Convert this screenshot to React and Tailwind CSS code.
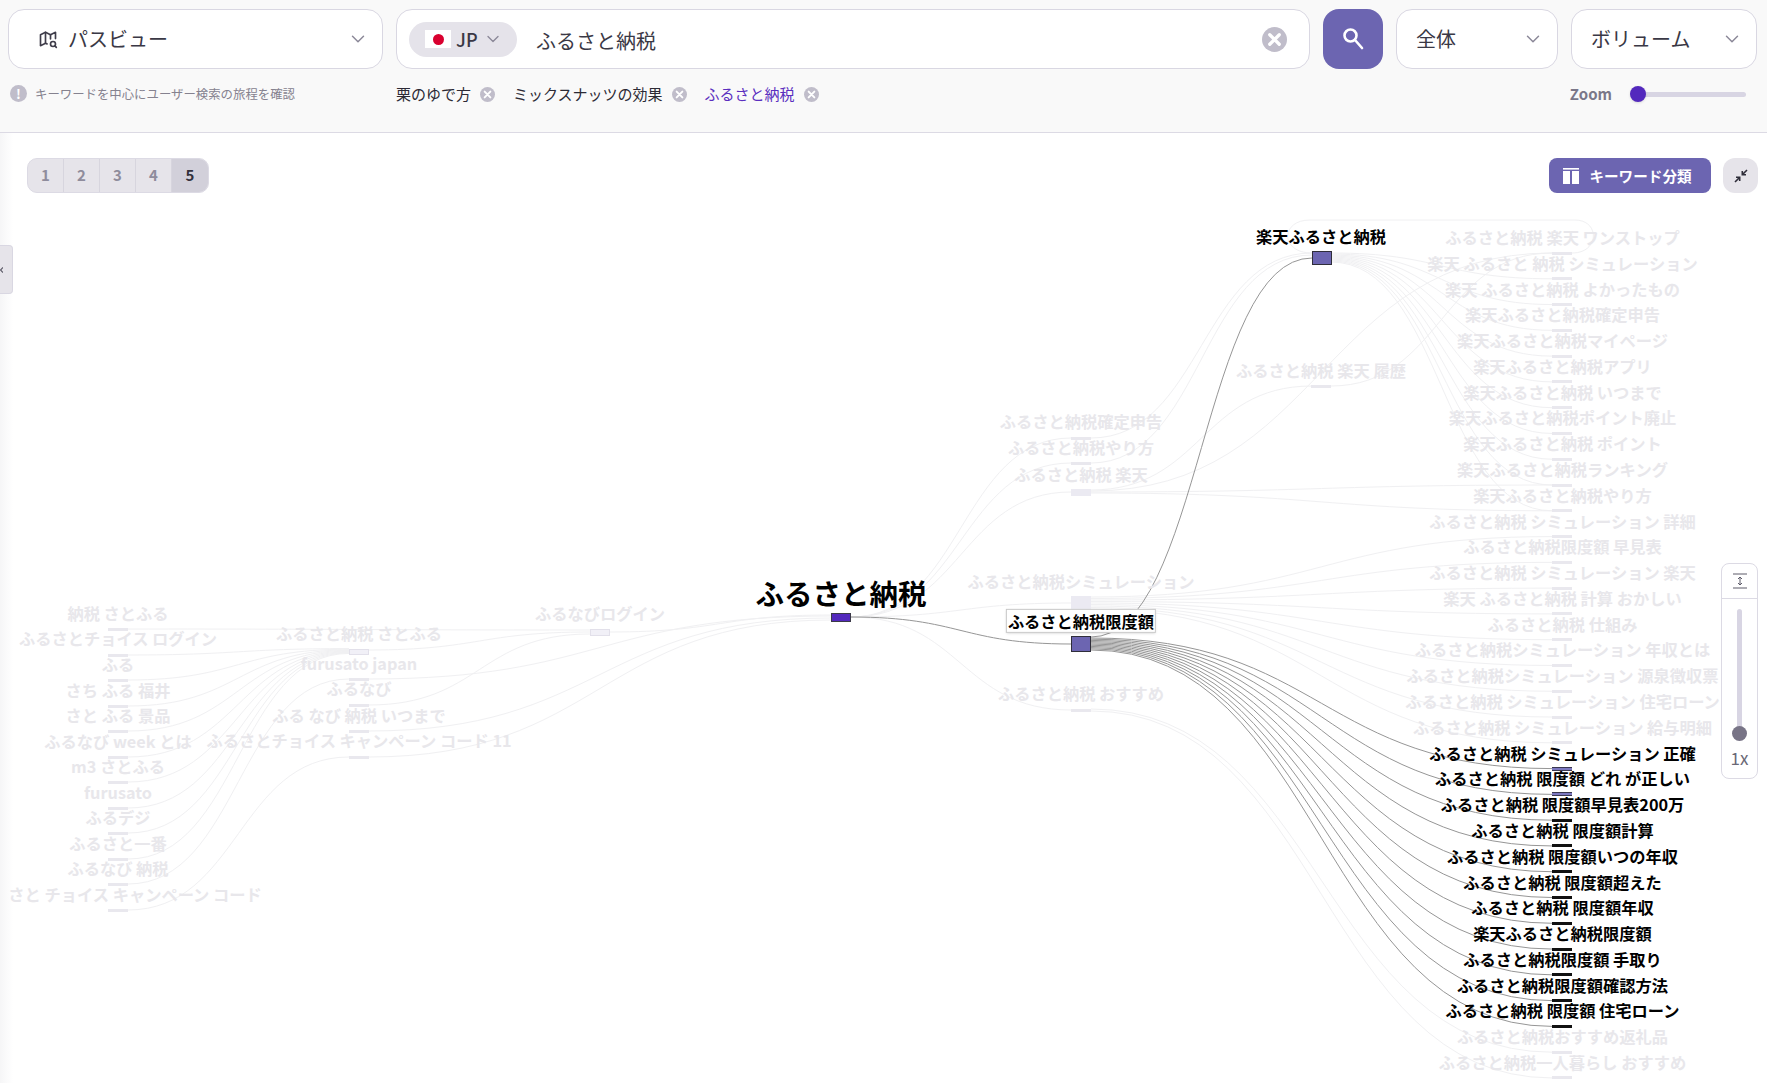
// Keyword path view
import { ChevronDown } from "lucide-react";
import { TbMapSearch } from "react-icons/tb";

const FONT = { fontFamily: '"Noto Sans CJK JP", "Noto Sans", sans-serif' };
const TOP = 133;

const rightLabels = [
  "ふるさと納税 楽天 ワンストップ",
  "楽天 ふるさと 納税 シミュレーション",
  "楽天 ふるさと納税 よかったもの",
  "楽天ふるさと納税確定申告",
  "楽天ふるさと納税マイページ",
  "楽天ふるさと納税アプリ",
  "楽天ふるさと納税 いつまで",
  "楽天ふるさと納税ポイント廃止",
  "楽天ふるさと納税 ポイント",
  "楽天ふるさと納税ランキング",
  "楽天ふるさと納税やり方",
  "ふるさと納税 シミュレーション 詳細",
  "ふるさと納税限度額 早見表",
  "ふるさと納税 シミュレーション 楽天",
  "楽天 ふるさと納税 計算 おかしい",
  "ふるさと納税 仕組み",
  "ふるさと納税シミュレーション 年収とは",
  "ふるさと納税シミュレーション 源泉徴収票",
  "ふるさと納税 シミュレーション 住宅ローン",
  "ふるさと納税 シミュレーション 給与明細",
  "ふるさと納税 シミュレーション 正確",
  "ふるさと納税 限度額 どれ が正しい",
  "ふるさと納税 限度額早見表200万",
  "ふるさと納税 限度額計算",
  "ふるさと納税 限度額いつの年収",
  "ふるさと納税 限度額超えた",
  "ふるさと納税 限度額年収",
  "楽天ふるさと納税限度額",
  "ふるさと納税限度額 手取り",
  "ふるさと納税限度額確認方法",
  "ふるさと納税 限度額 住宅ローン",
  "ふるさと納税おすすめ返礼品",
  "ふるさと納税一人暮らし おすすめ",
];

const col1 = [
  ["納税 さとふる", 613, 629, 118],
  ["ふるさとチョイス ログイン", 638, 655, 118],
  ["ふる", 664, 680, 118],
  ["さち ふる 福井", 690, 706, 118],
  ["さと ふる 景品", 715, 731, 118],
  ["ふるなび week とは", 741, 757, 118],
  ["m3 さとふる", 766, 782, 118],
  ["furusato", 792, 808, 118],
  ["ふるデジ", 817, 833, 118],
  ["ふるさと一番", 843, 859, 118],
  ["ふるなび 納税", 868, 884, 118],
  ["さと チョイス キャンペーン コード", 894, 910, 135],
];

const col2 = [
  ["ふるさと納税 さとふる", 633, 652],
  ["furusato japan", 663, 679],
  ["ふるなび", 688, 705],
  ["ふる なび 納税 いつまで", 715, 731],
  ["ふるさとチョイス キャンペーン コード 11", 740, 757],
];

const mid = [
  ["ふるさと納税確定申告", 421, 438],
  ["ふるさと納税やり方", 447, 463],
  ["ふるさと納税 楽天", 474, 492],
  ["ふるさと納税シミュレーション", 581, 603],
  ["ふるさと納税 おすすめ", 693, 710],
];

const barY = (i) => 253 + 25.78 * i;

// horizontal bezier between two nodes
const curve = (x0, y0, x1, y1) => {
  const m = (x0 + x1) / 2;
  return `M${x0} ${y0 - TOP}C${m} ${y0 - TOP} ${m} ${y1 - TOP} ${x1} ${y1 - TOP}`;
};

const dimLinks = [];
col1.forEach((row, i) => {
  if (i === 0) dimLinks.push(curve(128, row[2], 590, 630));
  else if (i === 10) dimLinks.push(curve(128, row[2], 349, 679));
  else if (i === 11) dimLinks.push(curve(128, row[2], 349, 757));
  else dimLinks.push(curve(128, row[2], 349, 648 + i * 0.6));
});
dimLinks.push(curve(369, 650, 590, 632));
dimLinks.push(curve(369, 705, 590, 634));
dimLinks.push(curve(369, 679, 831, 616));
dimLinks.push(curve(369, 731, 831, 618));
dimLinks.push(curve(369, 757, 831, 620));
dimLinks.push(curve(610, 632, 831, 615));
mid.forEach((row) => dimLinks.push(curve(851, 617, 1071, row[2])));
dimLinks.push(curve(1091, 438, 1312, 253));
dimLinks.push(curve(1091, 463, 1312, 255));
dimLinks.push(curve(1091, 490, 1312, 386));
dimLinks.push(curve(1091, 491, 1552, barY(0)));
dimLinks.push(curve(1091, 492, 1552, barY(9)));
dimLinks.push(curve(1091, 493, 1552, barY(10)));
dimLinks.push(curve(1331, 386, 1552, barY(0)));
for (let i = 1; i <= 10; i++) dimLinks.push(curve(1331, 252 + i, 1552, barY(i)));
for (let i = 11; i <= 19; i++) dimLinks.push(curve(1091, 597 + (i - 11) * 1.5, 1552, barY(i)));
dimLinks.push(curve(1091, 709, 1552, barY(31)));
dimLinks.push(curve(1091, 711, 1552, barY(32)));
dimLinks.push(`M1572 ${253 - TOP}C1600 ${253 - TOP} 1600 ${220 - TOP} 1575 ${220 - TOP}L1310 ${220 - TOP}C1280 ${220 - TOP} 1280 ${253 - TOP} 1312 ${253 - TOP}`);

const activeLinks = [curve(851, 617, 1071, 644), curve(1091, 637, 1312, 258)];
for (let i = 20; i <= 30; i++) activeLinks.push(curve(1091, 638 + (i - 20) * 1.2, 1552, barY(i)));

function Label({ x, y, active, children }) {
  return (
    <div
      className={`absolute -translate-x-1/2 -translate-y-1/2 whitespace-nowrap text-[16.25px] leading-none font-bold ${
        active ? "text-black" : "text-[#e8e7eb]"
      }`}
      style={{ left: x, top: y - TOP }}
    >
      {children}
    </div>
  );
}

function Bar({ x, y, h = 3, w = 20, className }) {
  return (
    <div
      className={`absolute -translate-x-1/2 ${className}`}
      style={{ left: x, top: y - TOP - h / 2, height: h, width: w }}
    />
  );
}

function Select({ width, children, pad }) {
  return (
    <div
      className={`flex h-[60px] items-center justify-between rounded-[16px] border border-[#d9d7e2] bg-white pr-[13px] ${pad} ${width}`}
    >
      {children}
      <ChevronDown size={22} strokeWidth={1.6} className="text-[#8b8898]" />
    </div>
  );
}

function CloseDot({ size, stroke = 2 }) {
  return (
    <svg width={size} height={size} viewBox="0 0 20 20">
      <circle cx="10" cy="10" r="10" fill="#c0bdca" />
      <path d="M6.2 6.2l7.6 7.6M13.8 6.2l-7.6 7.6" stroke="#fff" strokeWidth={stroke} strokeLinecap="round" />
    </svg>
  );
}

function Tag({ active, children }) {
  return (
    <div className="flex items-center gap-[9px]">
      <span className={`text-[15px] ${active ? "text-[#5b2fbf]" : "text-[#2c2a35]"}`}>{children}</span>
      <CloseDot size={15} stroke={2.6} />
    </div>
  );
}

export default function App() {
  return (
    <div className="flex h-[1083px] w-[1767px] flex-col overflow-hidden bg-white" style={FONT}>
      <header className="h-[133px] shrink-0 border-b border-[#dcdae4] bg-[#f9f9f9] pt-[9px] pl-[8px]">
        <div className="flex gap-[13px] text-[20px] text-[#3a3845]">
          <Select width="w-[375px]" pad="pl-[29px]">
            <div className="flex items-center gap-[10px]">
              <TbMapSearch size={20} className="text-[#3f3d4a]" />
              <span>パスビュー</span>
            </div>
          </Select>
          <div className="flex h-[60px] w-[914px] items-center rounded-[16px] border border-[#d9d7e2] bg-white pr-[22px] pl-[12px]">
            <div className="flex h-[35px] w-[108px] items-center rounded-full bg-[#e5e3ea] pl-[16px]">
              <div className="flex h-[18px] w-[26px] items-center justify-center bg-white">
                <div className="h-[11px] w-[11px] rounded-full bg-[#d9002f]" />
              </div>
              <span className="ml-[5px] text-[18px] font-medium">JP</span>
              <ChevronDown size={20} strokeWidth={1.6} className="ml-[5px] text-[#8b8898]" />
            </div>
            <span className="ml-[19px] flex-1 translate-y-[2px]">ふるさと納税</span>
            <CloseDot size={25} stroke={2.6} />
          </div>
          <div className="flex h-[60px] w-[60px] items-center justify-center rounded-[16px] bg-[#6c65b1]">
            <svg width="24" height="24" viewBox="0 0 24 24" fill="none" stroke="#fff" strokeWidth="2.6" strokeLinecap="round">
              <circle cx="9.5" cy="8.5" r="6" />
              <path d="M14 13l7 8" />
            </svg>
          </div>
          <Select width="w-[162px]" pad="pl-[19px]">
            <span>全体</span>
          </Select>
          <Select width="w-[186px]" pad="pl-[19px]">
            <span>ボリューム</span>
          </Select>
        </div>
        <div className="mt-[7px] flex h-[36px] items-center">
          <div className="flex w-[388px] items-center gap-[8px] pl-[2px]">
            <div className="flex h-[17px] w-[17px] items-center justify-center rounded-full bg-[#c0bdca] text-[13px] leading-none font-bold text-white">!</div>
            <span className="text-[12.4px] text-[#85828f]">キーワードを中心にユーザー検索の旅程を確認</span>
          </div>
          <div className="flex items-center gap-[18px]">
            <Tag>栗のゆで方</Tag>
            <Tag>ミックスナッツの効果</Tag>
            <Tag active>ふるさと納税</Tag>
          </div>
          <div className="ml-auto flex items-center pr-[21px]">
            <span className="text-[15px] font-bold text-[#7a7789]">Zoom</span>
            <div className="relative ml-[18px] h-[5px] w-[116px] rounded-full bg-[#d8d5e3]">
              <div className="absolute top-[-5.5px] left-0 h-[16px] w-[16px] rounded-full bg-[#5329bd] shadow" />
            </div>
          </div>
        </div>
      </header>

      <main className="relative flex-1">
        <div className="absolute inset-y-0 left-0 w-[13px] bg-gradient-to-r from-[#f6f6f7] to-white" />
        <svg className="absolute inset-0 h-full w-full" fill="none">
          {dimLinks.map((d, i) => (
            <path key={i} d={d} stroke="#f0f0f2" strokeWidth="1" />
          ))}
          {activeLinks.map((d, i) => (
            <path key={i} d={d} stroke="#969696" strokeWidth="1" />
          ))}
        </svg>

        {col1.map(([t, y, b, x]) => (
          <div key={t}>
            <Label x={x} y={y}>{t}</Label>
            <Bar x={118} y={b} className="bg-[#e9e8ee]" />
          </div>
        ))}
        {col2.map(([t, y, b], i) => (
          <div key={t}>
            <Label x={359} y={y}>{t}</Label>
            <Bar x={359} y={b} h={i === 0 ? 6 : 3} className={i === 0 ? "border border-[#e2e0ea] bg-[#f1f0f7]" : "bg-[#e9e8ee]"} />
          </div>
        ))}
        <Label x={600} y={613}>ふるなびログイン</Label>
        <Bar x={600} y={632} h={7} className="border border-[#e2e0ea] bg-[#f1f0f7]" />

        {mid.map(([t, y, b], i) => (
          <div key={t}>
            <Label x={1081} y={y}>{t}</Label>
            <Bar
              x={1081}
              y={b}
              h={i === 3 ? 14 : i === 2 ? 7 : 3}
              className={i === 2 || i === 3 ? "bg-[#ebeaf2]" : "bg-[#e9e8ee]"}
            />
          </div>
        ))}
        <Label x={1321} y={370}>ふるさと納税 楽天 履歴</Label>
        <Bar x={1321} y={386} className="bg-[#e9e8ee]" />

        {rightLabels.map((t, i) => (
          <div key={t}>
            <Label x={1562.5} y={barY(i) - 16} active={i >= 20 && i <= 30}>{t}</Label>
            <Bar
              x={1562}
              y={barY(i)}
              h={i === 20 || i === 21 ? 4 : 3}
              className={
                i === 20 || i === 21
                  ? "border-y border-[#3a3850] bg-[#7c78c0]"
                  : i > 21 && i <= 30
                    ? "bg-[#111]"
                    : "bg-[#e9e8ee]"
              }
            />
          </div>
        ))}

        {/* selected path */}
        <div
          className="absolute -translate-x-1/2 -translate-y-1/2 text-[28.5px] leading-none font-bold whitespace-nowrap text-black"
          style={{ left: 841, top: 593 - TOP }}
        >
          ふるさと納税
        </div>
        <Bar x={841} y={617.5} h={9} className="border border-[#3b3a48] bg-[#5329bd]" />
        <div
          className="absolute -translate-x-1/2 -translate-y-1/2 border border-[#c9c9c9] bg-white px-[1px] py-[3px] text-[16.25px] leading-none font-bold whitespace-nowrap text-black shadow"
          style={{ left: 1081, top: 621 - TOP }}
        >
          ふるさと納税限度額
        </div>
        <Bar x={1081} y={644} h={16} className="border-[1.5px] border-[#2f2e3a] bg-[#6c65b1]" />
        <Label x={1321} y={235.5} active>楽天ふるさと納税</Label>
        <Bar x={1321.5} y={258} h={14} className="border-[1.5px] border-[#2f2e3a] bg-[#6c65b1]" />

        {/* page + actions toolbar */}
        <div className="relative flex items-start justify-between pt-[25px] pr-[9px] pl-[27px]">
          <div className="flex h-[35px] overflow-hidden rounded-[10px] border border-[#dcdae4] bg-[#e6e4ea] text-[15px] font-bold text-[#8f8c9c]">
            {[1, 2, 3, 4].map((n) => (
              <div key={n} className="flex w-[36px] items-center justify-center border-r border-[#d7d5de]">{n}</div>
            ))}
            <div className="flex w-[36px] items-center justify-center bg-[#d2d0da] text-[#33313c]">5</div>
          </div>
          <div className="flex gap-[12px]">
            <div className="flex h-[35px] w-[162px] items-center justify-center gap-[10px] rounded-[8px] bg-[#6c65b1] pr-[5px] text-[14.6px] font-bold text-white">
              <svg width="16" height="16" viewBox="0 0 16 16" fill="#fff">
                <rect x="0" y="0" width="16" height="1.6" />
                <rect x="0" y="3" width="7" height="13" />
                <rect x="9" y="3" width="7" height="13" />
              </svg>
              キーワード分類
            </div>
            <div className="flex h-[35px] w-[35px] items-center justify-center rounded-[12px] bg-[#e6e4ea]">
              <svg width="14" height="14" viewBox="0 0 14 14" fill="none" stroke="#2f2e3a" strokeWidth="1.6">
                <path d="M13 1L8.5 5.5M8.3 2v3.7H12" />
                <path d="M1 13l4.5-4.5M5.7 12V8.3H2" />
              </svg>
            </div>
          </div>
        </div>

        {/* left drawer tab */}
        <div className="absolute top-[112px] left-0 flex h-[49px] w-[13px] items-center rounded-r-[4px] border border-l-0 border-[#d9d7e2] bg-[#e6e4ea]">
          <svg width="3" height="6" viewBox="0 0 3 6" fill="none" stroke="#5c5a68" strokeWidth="1.2">
            <path d="M3 0.5L0.5 3l2.5 2.5" />
          </svg>
        </div>

        {/* vertical zoom */}
        <div className="absolute top-[430px] right-[9px] flex h-[216px] w-[37px] flex-col items-center rounded-[8px] border border-[#dcdae4] bg-white">
          <div className="flex h-[35px] w-full items-center justify-center border-b border-[#dcdae4]">
            <svg width="16" height="16" viewBox="0 0 16 16" fill="none" stroke="#5c5a68" strokeWidth="1">
              <path d="M1 1h14M1 15h14M8 4v8M6 6l2-2 2 2M6 10l2 2 2-2" />
            </svg>
          </div>
          <div className="relative mt-[10px] h-[125px] w-[5px] rounded-full bg-[#d8d5e3]">
            <div className="absolute bottom-[-7px] left-[-5px] h-[15px] w-[15px] rounded-full bg-[#787486]" />
          </div>
          <span className="mt-[15px] text-[17px] leading-none text-[#6a6876]">1x</span>
        </div>
      </main>
    </div>
  );
}
